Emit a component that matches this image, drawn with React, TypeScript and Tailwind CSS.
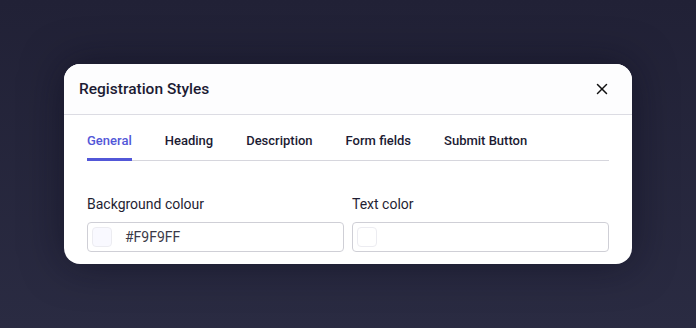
import { X } from 'lucide-react';

const tabs = ['General', 'Heading', 'Description', 'Form fields', 'Submit Button'];

function ColorField({ label, value, swatch }: { label: string; value?: string; swatch: string }) {
  return (
    <div className="flex flex-col">
      <label className="text-[14px] leading-5 text-[#1f1e33] mb-[8px]">{label}</label>
      <div className="flex items-center h-[30px] rounded-[4px] border border-[#cfcfd6] bg-white px-[4px]">
        <span
          className="w-[20px] h-[20px] rounded-[4px] border border-[#ececf1]"
          style={{ backgroundColor: swatch }}
        />
        {value && <span className="ml-[13px] text-[14px] text-[#3a3a48]">{value}</span>}
      </div>
    </div>
  );
}

export default function App() {
  return (
    <div
      className="w-[696px] h-[328px] pt-16 pl-16 bg-gradient-to-b from-[#212136] to-[#2a2b42]"
      style={{ fontFamily: 'Roboto, "Noto Sans", sans-serif' }}
    >
      <div className="w-[568px] h-[200px] rounded-2xl bg-white overflow-hidden shadow-[0_0_40px_rgba(10,10,25,0.5)]">
        {/* Header */}
        <div className="h-[51px] flex items-center justify-between pl-[15px] pr-[21px] border-b border-[#dcdce3] bg-[#fdfdfe]">
          <h2 className="text-[15.5px] leading-5 font-medium text-[#1c1b33]">Registration Styles</h2>
          <X className="w-[18px] h-[18px] text-[#111]" strokeWidth={2} />
        </div>

        {/* Tabs */}
        <div className="px-[23px]">
          <div className="flex gap-[33px] border-b border-[#d6d6dd] pt-[17px]">
            {tabs.map((t, i) => (
              <div
                key={t}
                className={`pb-[8px] text-[13px] leading-[18px] font-medium border-b-[3px] -mb-px ${
                  i === 0 ? 'text-[#5257d8] border-[#5257d8]' : 'text-[#1c1b33] border-transparent'
                }`}
              >
                {t}
              </div>
            ))}
          </div>

          <div className="grid grid-cols-2 gap-2 pt-[33px]">
            <ColorField label="Background colour" value="#F9F9FF" swatch="#F9F9FF" />
            <ColorField label="Text color" swatch="#ffffff" />
          </div>
        </div>
      </div>
    </div>
  );
}
